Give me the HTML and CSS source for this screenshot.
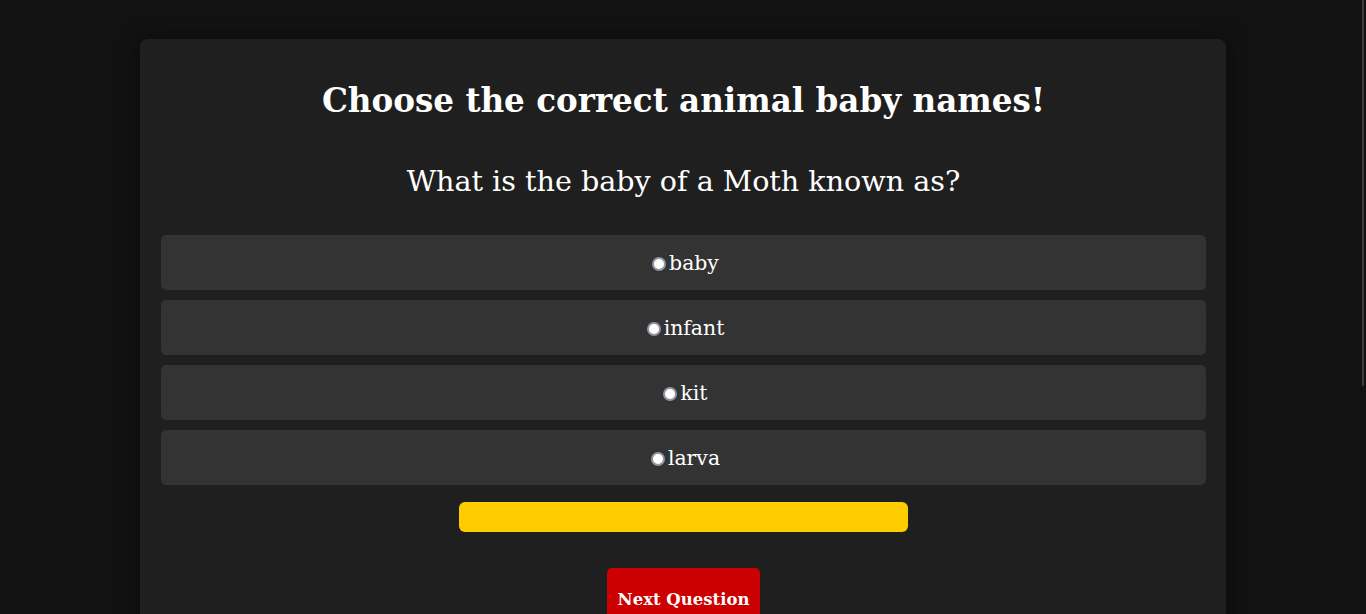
FILE: index.html
```html
<!DOCTYPE html>
<html lang="en">
<head>
<meta charset="utf-8">
<title>Animal Baby Names Quiz</title>
<link rel="stylesheet" href="styles.css">
</head>
<body>
<div class="scroll-thumb"></div>
<main class="quiz">
  <h1 class="title">Choose the correct animal baby names!</h1>
  <p class="question">What is the baby of a Moth known as?</p>
  <div class="options">
    <label class="option"><span class="radio"></span>baby</label>
    <label class="option"><span class="radio"></span>infant</label>
    <label class="option"><span class="radio"></span>kit</label>
    <label class="option"><span class="radio"></span>larva</label>
  </div>
  <div class="feedback"></div>
  <button class="next">Next Question</button>
</main>
</body>
</html>
```
FILE: styles.css
```css
html, body {
  margin: 0;
  padding: 0;
  height: 614px;
  overflow: hidden;
}
body {
  background: #121212;
  color: #ffffff;
  font-family: "DejaVu Serif", serif;
  padding-top: 39px;
  box-sizing: border-box;
}
.scroll-thumb {
  position: fixed;
  top: 0;
  right: 2px;
  width: 2px;
  height: 386px;
  background: #35403b;
}
.quiz {
  width: 1086px;
  margin: 0 auto;
  background: #1f1f1f;
  border-radius: 8px;
  box-shadow: 0 0 20px rgba(0, 0, 0, 0.5);
  padding: 20px 20px 40px 21px;
  box-sizing: border-box;
  text-align: center;
}
.title {
  font-size: 32.6px;
  font-weight: bold;
  margin: 23px 0 0;
  line-height: 37px;
}
.question {
  font-size: 28.6px;
  margin: 46px 0 0;
  line-height: 32px;
}
.options {
  display: flex;
  flex-direction: column;
  gap: 10px;
  margin-top: 38px;
}
.option {
  display: flex;
  align-items: center;
  justify-content: center;
  height: 55px;
  background: #333333;
  border-radius: 5px;
  font-size: 20.4px;
}
.radio {
  width: 10px;
  height: 10px;
  border: 2px solid #9595a3;
  border-radius: 50%;
  background: #ffffff;
  margin: 2px 3px 0 4px;
  box-sizing: content-box;
}
.feedback {
  width: 449px;
  height: 30px;
  margin: 17px auto 0;
  background: #ffcc00;
  border-radius: 6px;
}
.next {
  display: block;
  margin: 36px auto 0;
  width: 153px;
  height: 63px;
  background: #cc0000;
  color: #ffffff;
  border: none;
  border-radius: 5px;
  font-family: "DejaVu Serif", serif;
  font-weight: bold;
  font-size: 16.5px;
  padding: 0;
}
```
